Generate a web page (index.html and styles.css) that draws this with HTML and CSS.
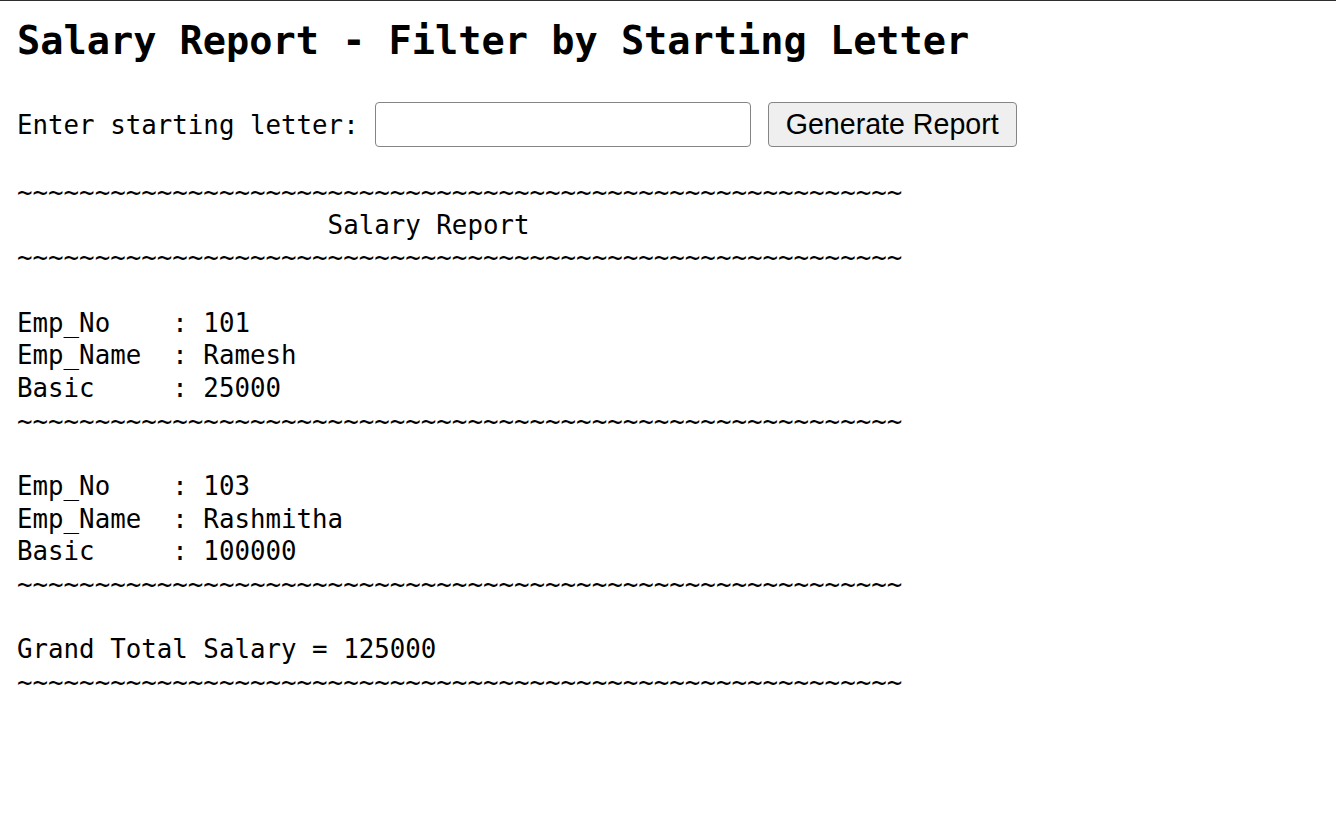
FILE: index.html
```html
<!DOCTYPE html>
<html lang="en">
<head>
<meta charset="utf-8">
<title>Salary Report</title>
<link rel="stylesheet" href="styles.css">
</head>
<body>
<h2 class="title">Salary Report - Filter by Starting Letter</h2>
<div class="filter-row">
  <label class="filter-label" for="letter">Enter starting letter:</label>
  <input class="filter-input" id="letter" type="text">
  <button class="filter-btn" type="button">Generate Report</button>
</div>
<pre class="report">~~~~~~~~~~~~~~~~~~~~~~~~~~~~~~~~~~~~~~~~~~~~~~~~~~~~~~~~~
                    Salary Report
~~~~~~~~~~~~~~~~~~~~~~~~~~~~~~~~~~~~~~~~~~~~~~~~~~~~~~~~~

Emp_No    : 101
Emp_Name  : Ramesh
Basic     : 25000
~~~~~~~~~~~~~~~~~~~~~~~~~~~~~~~~~~~~~~~~~~~~~~~~~~~~~~~~~

Emp_No    : 103
Emp_Name  : Rashmitha
Basic     : 100000
~~~~~~~~~~~~~~~~~~~~~~~~~~~~~~~~~~~~~~~~~~~~~~~~~~~~~~~~~

Grand Total Salary = 125000
~~~~~~~~~~~~~~~~~~~~~~~~~~~~~~~~~~~~~~~~~~~~~~~~~~~~~~~~~</pre>
</body>
</html>
```
FILE: styles.css
```css
html, body {
  background: #ffffff;
}
body {
  margin: 0;
  padding: 0 17px;
  border-top: 1px solid #2e2e2e;
  font-family: "DejaVu Sans Mono", "Liberation Mono", monospace;
  color: #000;
}
.title {
  margin: 15px 0 0;
  font-family: "DejaVu Sans Mono", "Liberation Mono", monospace;
  font-size: 38.6px;
  line-height: 49px;
  font-weight: bold;
}
.filter-row {
  display: flex;
  align-items: center;
  margin-top: 37px;
  height: 45px;
}
.filter-label {
  font-size: 25.8px;
  line-height: 32px;
  margin-right: 16px;
}
.filter-input {
  box-sizing: border-box;
  width: 376px;
  height: 45px;
  margin: 0 17px 0 0;
  border: 1px solid #858585;
  border-radius: 4px;
  background: #fff;
  padding: 0 6px;
  font-size: 24px;
}
.filter-btn {
  box-sizing: border-box;
  width: 249px;
  height: 45px;
  margin: 0;
  padding: 0;
  border: 1px solid #858585;
  border-radius: 4px;
  background: #efefef;
  color: #000;
  font-family: "Liberation Sans", Arial, sans-serif;
  font-size: 28.6px;
}
.report {
  margin: 29px 0 0;
  font-family: "DejaVu Sans Mono", "Liberation Mono", monospace;
  font-size: 25.8px;
  line-height: 32.67px;
  color: #000;
}
```
